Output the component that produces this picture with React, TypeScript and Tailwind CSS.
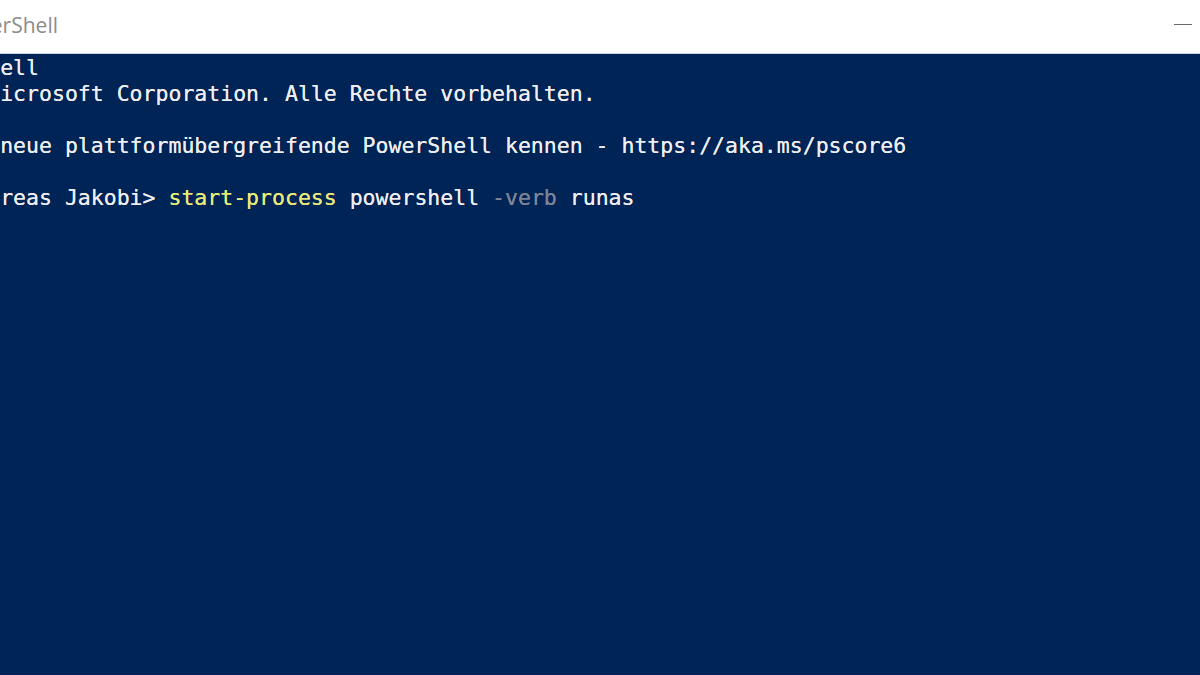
import React from "react";

export default function App() {
  const mono = { fontFamily: '"DejaVu Sans Mono", "Liberation Mono", monospace' };
  return (
    <div className="w-[1200px] h-[675px] overflow-hidden flex flex-col bg-[#012456]">
      <div className="h-[54px] shrink-0 bg-white border-b border-[#c9d2e4] flex items-center justify-between">
        <div
          className="w-[58px] flex justify-end whitespace-nowrap text-[21px] text-[#8c8c8c] pb-[2px]"
          style={{ fontFamily: '"Open Sans", "Noto Sans", sans-serif' }}
        >
          Windows PowerShell
        </div>
        <div className="w-[18px] h-[1px] bg-[#6a6a6a] mr-[8px] mb-[4px]" />
      </div>
      <div
        className="ml-[-194px] pt-[1px] text-[21.5px] leading-[26px] text-[#eeedf0] whitespace-pre [text-shadow:0_0_0.6px_currentColor]"
        style={mono}
      >
        <div>Windows PowerShell</div>
        <div>Copyright (C) Microsoft Corporation. Alle Rechte vorbehalten.</div>
        <div>&nbsp;</div>
        <div>Lernen Sie das neue plattformübergreifende PowerShell kennen - https://aka.ms/pscore6</div>
        <div>&nbsp;</div>
        <div>
          PS C:\Users\Andreas Jakobi&gt; <span className="text-[#e8ea78]">start-process</span> powershell{" "}
          <span className="text-[#7d8496]">-verb</span> runas
        </div>
      </div>
    </div>
  );
}
